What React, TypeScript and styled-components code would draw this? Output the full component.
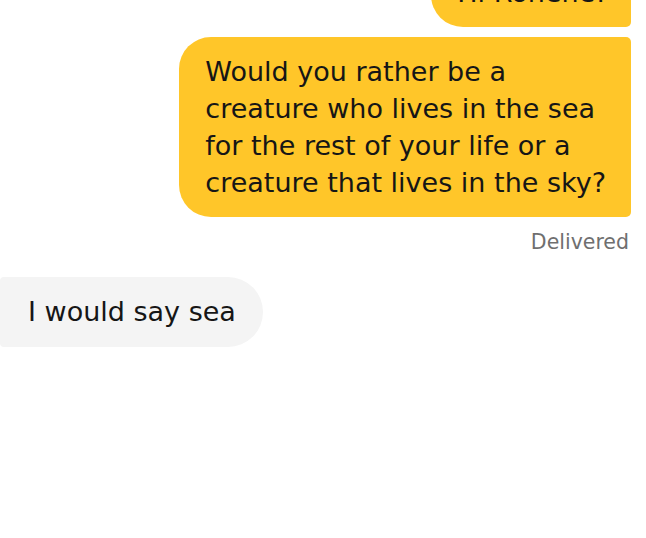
import React from "react"
import styled, { createGlobalStyle } from "styled-components"

const GlobalStyle = createGlobalStyle`
  html, body {
    margin: 0;
    padding: 0;
    background: #ffffff;
    overflow: hidden;
  }
  body {
    font-family: "DejaVu Sans", "Noto Sans", sans-serif;
    color: #161616;
  }
`

const Thread = styled.div`
  display: flex;
  flex-direction: column;
  width: 646px;
  height: 538px;
  overflow: hidden;
  padding: 0 15px 0 0;
  box-sizing: border-box;
`

const Messages = styled.div`
  display: flex;
  flex-direction: column;
  margin-top: -42px;
`

const Bubble = styled.div<{ $mine?: boolean }>`
  align-self: ${(p) => (p.$mine ? "flex-end" : "flex-start")};
  max-width: 450px;
  padding: ${(p) => (p.$mine ? "16px 25px 16px 26px" : "16px 27px 17px 28px")};
  margin-top: ${(p) => (p.$mine ? "10px" : "0")};
  background: ${(p) => (p.$mine ? "#ffc629" : "#f4f4f4")};
  border-radius: ${(p) => (p.$mine ? "32px 5px 5px 32px" : "4px 35px 35px 4px")};
  font-size: 27px;
  line-height: 37px;
  color: #161616;
  &:first-child {
    margin-top: 0;
  }
`

const Status = styled.div`
  align-self: flex-end;
  margin: 12px 2px 0 0;
  font-size: 20.5px;
  line-height: 26px;
  color: #6f6f6f;
`

const Received = styled.div`
  display: flex;
  margin-top: 22px;
  margin-right: -15px;
`

const lines = [
  "Would you rather be a",
  "creature who lives in the sea",
  "for the rest of your life or a",
  "creature that lives in the sky?",
]

export default function App() {
  return (
    <>
      <GlobalStyle />
      <Thread>
        <Messages>
          <Bubble $mine>Hi Rohene!</Bubble>
          <Bubble $mine>
            {lines.map((line, i) => (
              <React.Fragment key={i}>
                {line}
                {i < lines.length - 1 && <br />}
              </React.Fragment>
            ))}
          </Bubble>
          <Status>Delivered</Status>
          <Received>
            <Bubble>I would say sea</Bubble>
          </Received>
        </Messages>
      </Thread>
    </>
  )
}
